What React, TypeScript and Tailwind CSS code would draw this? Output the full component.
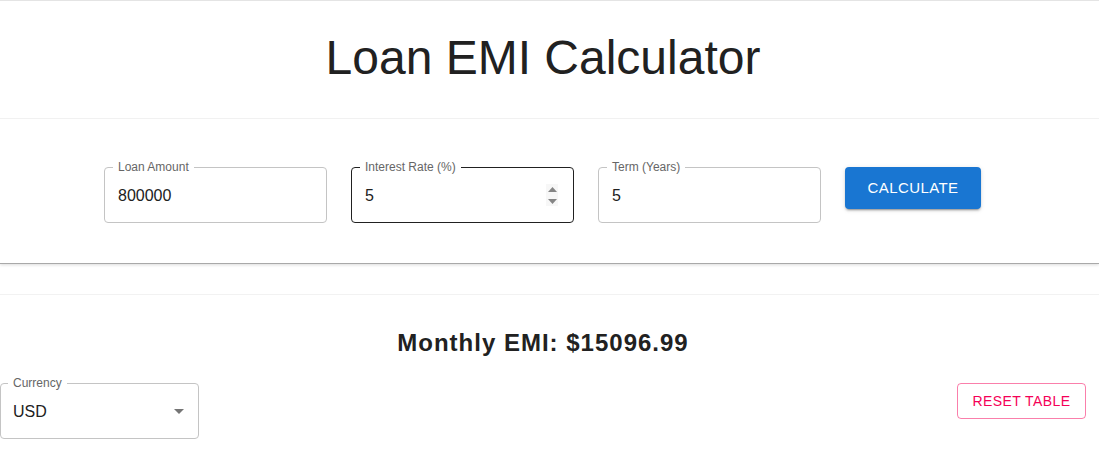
import React from "react";

const font = { fontFamily: '"Liberation Sans", Arial, sans-serif' };

function Field({
  label,
  value,
  focused,
  spinner,
  width,
}: {
  label: string;
  value: string;
  focused?: boolean;
  spinner?: boolean;
  width: string;
}) {
  return (
    <div
      className={`relative h-[56px] ${width} rounded-[4px] border ${
        focused ? "border-[#212121]" : "border-[#c4c4c4]"
      } flex items-center pl-[13px] pr-[15px]`}
    >
      <span className="absolute -top-[8px] left-[8px] bg-white px-[5px] text-[12px] leading-[14px] text-[#666666]">
        {label}
      </span>
      <span className="flex-1 text-[16px] leading-[19px] text-[#212121]">{value}</span>
      {spinner && (
        <div className="flex h-[22px] w-[12px] flex-col items-center justify-center gap-[7px] bg-[#f7f7f7]">
          <svg width="9" height="5" viewBox="0 0 9 5">
            <path d="M4.5 0L9 5H0z" fill="#858585" />
          </svg>
          <svg width="9" height="5" viewBox="0 0 9 5">
            <path d="M0 0H9L4.5 5z" fill="#858585" />
          </svg>
        </div>
      )}
    </div>
  );
}

export default function App() {
  return (
    <div className="min-h-[471px] w-full bg-white" style={font}>
      <div className="border-t border-[#e4e4e4]" />
      <div className="h-[118px] border-b border-[#f2f2f2] bg-white">
        <div className="w-[1086px] pt-[29px] text-center text-[48px] leading-[56px] text-[#212121]">
          Loan EMI Calculator
        </div>
      </div>
      <div className="h-[144px] bg-white shadow-[0_1px_0_#a9a9a9,0_2px_3px_rgba(0,0,0,0.14)]">
        <div className="flex w-[1085px] items-start justify-center gap-[24px] pt-[48px]">
          <Field label="Loan Amount" value="800000" width="w-[223px]" />
          <Field label="Interest Rate (%)" value="5" focused spinner width="w-[223px]" />
          <Field label="Term (Years)" value="5" width="w-[223px]" />
          <button className="flex h-[42px] w-[136px] items-center justify-center rounded-[4px] bg-[#1976d2] text-[15px] tracking-[0.43px] text-white shadow-[0_3px_1px_-2px_rgba(0,0,0,0.2),0_2px_2px_0_rgba(0,0,0,0.14),0_1px_5px_0_rgba(0,0,0,0.12)]">
            CALCULATE
          </button>
        </div>
      </div>
      <div className="mt-[31px] border-t border-[#f2f2f2] bg-white">
        <div className="w-[1086px] pt-[32px]">
          <div className="text-center text-[24px] font-bold leading-[32px] tracking-[1px] text-[#212121]">
            Monthly EMI: $15096.99
          </div>
          <div className="mt-[24px] flex items-start justify-between">
            <div className="relative flex h-[56px] w-[199px] items-center rounded-[4px] border border-[#c4c4c4] pl-[12px]">
              <span className="absolute -top-[8px] left-[7px] bg-white px-[5px] text-[12px] leading-[14px] text-[#666666]">
                Currency
              </span>
              <span className="flex-1 text-[16px] leading-[19px] text-[#212121]">USD</span>
              <svg className="mr-[7px]" width="24" height="24" viewBox="0 0 24 24">
                <path d="M7 10l5 5 5-5z" fill="#757575" />
              </svg>
            </div>
            <button className="flex h-[36px] w-[129px] items-center justify-center rounded-[4px] border border-[rgba(245,0,87,0.5)] text-[14px] tracking-[0.4px] text-[#f50057]">
              RESET TABLE
            </button>
          </div>
        </div>
      </div>
    </div>
  );
}
